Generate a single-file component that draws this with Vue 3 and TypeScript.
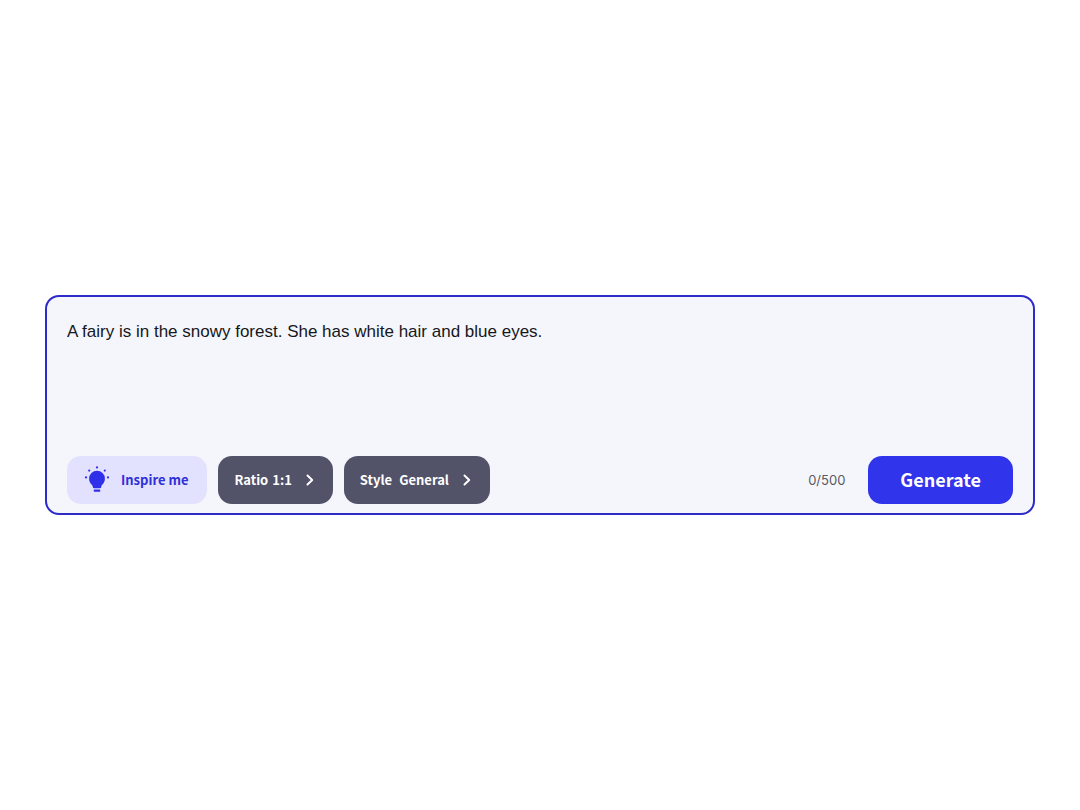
<script setup lang="ts">
import { computed, ref } from 'vue'

interface Option {
  label: string
  value: string
  spaced: boolean
}

const prompt = ref('A fairy is in the snowy forest. She has white hair and blue eyes.')
const used = ref(0)
const limit = 500
const counter = computed(() => `${used.value}/${limit}`)

const options: Option[] = [
  { label: 'Ratio', value: '1:1', spaced: false },
  { label: 'Style', value: 'General', spaced: true },
]

function updateCount(): void {
  used.value = prompt.value.length
}
</script>

<template>
  <main class="page">
    <form class="composer" @submit.prevent>
      <textarea
        v-model="prompt"
        class="prompt"
        aria-label="Prompt"
        :maxlength="limit"
        spellcheck="false"
        @input="updateCount"
      ></textarea>
      <div class="toolbar">
        <button type="button" class="btn inspire">
          <svg class="bulb" viewBox="0 0 26 28" aria-hidden="true">
            <path
              d="M13 4.800a7.900 7.900 0 0 0-7.900 7.900c0 2.800 1.300 4.600 2.700 6.100.7.8.9 1.400 1 2.200.1.800.5 1.200 1.200 1.200h6c.7 0 1.100-.4 1.200-1.200.1-.8.3-1.400 1-2.200 1.400-1.500 2.700-3.300 2.700-6.100A7.900 7.900 0 0 0 13 4.800z"
            />
            <rect x="9.800" y="23.600" width="6.400" height="2.200" rx=".6" />
            <circle cx="13" cy="1.400" r="1.100" />
            <circle cx="5.200" cy="4.600" r="1.100" />
            <circle cx="20.800" cy="4.600" r="1.100" />
            <circle cx="2" cy="11.400" r="1.100" />
            <circle cx="24" cy="11.400" r="1.100" />
          </svg>
          <span>Inspire me</span>
        </button>
        <button v-for="option in options" :key="option.label" type="button" class="btn option">
          <span class="pair" :class="{ spaced: option.spaced }">
            <span>{{ option.label }}</span>
            <span>{{ option.value }}</span>
          </span>
          <svg class="chevron" viewBox="0 0 8 12" aria-hidden="true">
            <path d="M1.500 1.500 6.200 6l-4.700 4.500" />
          </svg>
        </button>
        <span class="counter">{{ counter }}</span>
        <button type="submit" class="btn generate">Generate</button>
      </div>
    </form>
  </main>
</template>

<style>
body {
  margin: 0;
  background: #fff;
}
</style>

<style scoped>
.page {
  box-sizing: border-box;
  min-height: 100vh;
  padding: 45px;
  display: flex;
  align-items: center;
}

.composer {
  box-sizing: border-box;
  flex: 1;
  min-width: 0;
  padding: 20px 20px 9px;
  display: flex;
  flex-direction: column;
  gap: 9px;
  border: 2px solid #2e2bc8;
  border-radius: 14px;
  background: #f4f6fb;
}

.prompt {
  display: block;
  box-sizing: border-box;
  width: 100%;
  height: 130px;
  padding: 0;
  border: 0;
  outline: 0;
  resize: none;
  background: transparent;
  color: #17171c;
  font: 400 17px/30px "Liberation Sans", Arial, sans-serif;
}

.toolbar {
  display: flex;
  flex-wrap: wrap;
  align-items: center;
  gap: 11px;
}

.btn {
  height: 48px;
  padding: 0 18px 0 17px;
  display: flex;
  align-items: center;
  border: 0;
  border-radius: 14px;
  font: 700 13px/24px "Noto Sans CJK SC", "Noto Sans", sans-serif;
  white-space: nowrap;
  cursor: pointer;
}

.inspire {
  padding-right: 19px;
  gap: 11px;
  background: #e3e2fe;
  color: #302fd8;
}

.bulb {
  width: 26px;
  height: 28px;
  fill: #3030e8;
}

.option {
  gap: 14px;
  padding: 0 19px 0 16px;
  background: #525268;
  color: #fff;
}

.pair {
  display: flex;
  gap: 4px;
}

.pair.spaced {
  gap: 7px;
}

.chevron {
  width: 8px;
  height: 12px;
  fill: none;
  stroke: #fff;
  stroke-width: 2;
  stroke-linecap: round;
  stroke-linejoin: round;
}

.counter {
  margin-left: auto;
  margin-right: 12px;
  color: #5a5a62;
  font: 400 13px/20px Inter, "Liberation Sans", sans-serif;
}

.generate {
  padding: 0 32px 2px;
  background: #3034ea;
  color: #fff;
  font-size: 18px;
}
</style>
